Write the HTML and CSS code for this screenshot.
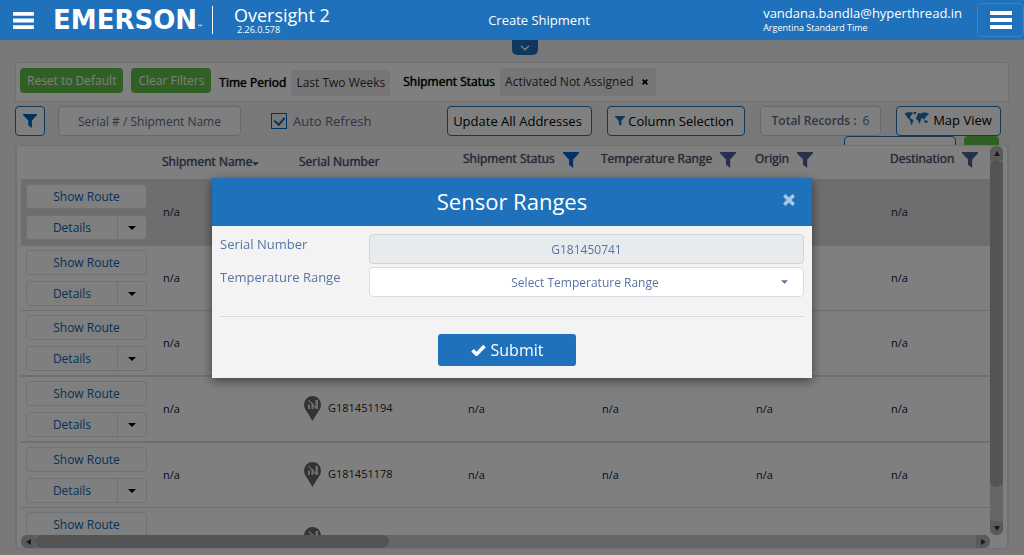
FILE: index.html
```html
<!DOCTYPE html>
<html lang="en">
<head>
<meta charset="utf-8">
<meta name="viewport" content="width=device-width, initial-scale=1">
<title>Oversight 2 - Create Shipment</title>
<link rel="stylesheet" href="styles.css">
</head>
<body>
<svg class="defs" aria-hidden="true">
  <symbol id="funnel" viewBox="0 0 16 16"><path d="M0 0h16v1.200l-5.800 6.300V16L6 12.800V7.500L0 1.200z"/></symbol>
  <symbol id="bars" viewBox="0 0 22 18"><path d="M0 0h22v4H0zM0 7h22v4H0zM0 14h22v4H0z"/></symbol>
  <symbol id="caret" viewBox="0 0 8 4"><path d="M0 0h8L4 4z"/></symbol>
  <symbol id="cross" viewBox="0 0 12 12"><path d="M2.500 0 6 3.500 9.500 0 12 2.500 8.500 6 12 9.500 9.500 12 6 8.500 2.500 12 0 9.500 3.500 6 0 2.500z"/></symbol>
  <symbol id="pin" viewBox="0 0 17 25"><path d="M8.500 0A8.500 8.500 0 0 0 0 8.500C0 12 2 14.500 4 17.500L8.500 25 13 17.500c2-3 4-5.500 4-9A8.500 8.500 0 0 0 8.500 0z"/><path class="pin-chart" d="M4 8.500h2V13H4zM7.500 7h2v6h-2zM11.500 4H14v9h-2.500zM4 4.500l1-.8 7 7.500v1.800z"/></symbol>
  <symbol id="world" viewBox="0 0 24 13"><path d="M0 1l3-.8L7 .3l1 1.500-1.500 1L5.800 4.500 4.500 5.500l1 1 2 .8 1 1.200-.8 1.500L7 12.500l-1 .3-.6-3L4.500 7.500 2.500 6 1.500 3.500 0 2.800zM8 0l3.500 0L10.500 2.300l-1 .5zM12 3l1.500-2 2 .5L19 .2l4.800 1-.5 1.500L21.500 4l-1 1.800-1 1-.7 1-.8-2-.8 1.200L16.500 5.500l-.5 2L15 11l-1 .6-1-3.400-1.800-1-.2-2L12.500 4zM19.500 8.700l2-.7 1.300 1.800-.6 1.200-1.200-.3-1.500.3zM18.200 6.800l1.300 1.500-1 .3z"/></symbol>
</svg>

<header class="topbar">
  <button class="menu-btn" type="button" aria-label="Main menu"><svg width="21" height="17"><use href="#bars"/></svg></button>
  <div class="logo">EMERSON<span class="tm">™</span></div>
  <div class="product"><div class="product-name">Oversight 2</div><div class="version">2.26.0.578</div></div>
  <h1 class="page-title">Create Shipment</h1>
  <div class="user"><div class="email">vandana.bandla@hyperthread.in</div><div class="zone">Argentina Standard Time</div></div>
  <button class="menu-btn framed" type="button" aria-label="User menu"><svg width="22" height="18"><use href="#bars"/></svg></button>
</header>

<main class="page">
  <button class="drop-tab" type="button" aria-label="Expand"><svg width="10" height="6" viewBox="0 0 10 6"><path d="M1 .8l4 4 4-4"/></svg></button>

  <section class="filters">
    <button class="btn-green" type="button">Reset to Default</button>
    <button class="btn-green" type="button">Clear Filters</button>
    <div class="criterion low"><span class="criterion-name">Time Period</span><span class="chip">Last Two Weeks</span></div>
    <div class="criterion"><span class="criterion-name">Shipment Status</span><span class="chip wide">Activated Not Assigned<button class="chip-x" type="button" aria-label="Remove filter"><svg width="6" height="6"><use href="#cross"/></svg></button></span></div>
  </section>

  <section class="toolbar">
    <button class="tool funnel-btn" type="button" aria-label="Filter"><svg width="14" height="14"><use href="#funnel"/></svg></button>
    <input class="search" type="text" placeholder="Serial # / Shipment Name" aria-label="Serial # / Shipment Name">
    <label class="auto"><input class="check" type="checkbox" checked>Auto Refresh</label>
    <div class="tools">
      <button class="tool update" type="button">Update All Addresses</button>
      <button class="tool columns" type="button"><svg class="blue" width="10" height="10"><use href="#funnel"/></svg>Column Selection</button>
      <div class="tool total"><b>Total Records :</b><span>6</span></div>
      <button class="tool map" type="button"><svg class="blue world" width="24" height="13"><use href="#world"/></svg>Map View</button>
    </div>
  </section>
  <div class="overflow-tools">
    <button class="tool stub" type="button" aria-label="More tools"></button>
    <button class="stub-green" type="button" aria-label="Export"></button>
  </div>

  <section class="panel">
    <div class="viewport">
      <table class="grid">
        <colgroup><col class="c-act"><col class="c-name"><col class="c-serial"><col class="c-status"><col class="c-temp"><col class="c-origin"><col></colgroup>
        <thead>
          <tr>
            <th aria-label="Actions"></th>
            <th class="plain">Shipment Name<svg class="sort" width="7" height="4"><use href="#caret"/></svg></th>
            <th class="plain">Serial Number</th>
            <th><span class="th">Shipment Status<svg class="active" width="16" height="16"><use href="#funnel"/></svg></span></th>
            <th><span class="th">Temperature Range<svg width="16" height="16"><use href="#funnel"/></svg></span></th>
            <th><span class="th">Origin<svg width="16" height="16"><use href="#funnel"/></svg></span></th>
            <th><span class="th">Destination<svg width="16" height="16"><use href="#funnel"/></svg></span></th>
          </tr>
        </thead>
        <tbody>
          <tr class="selected">
            <td><div class="actions"><button class="act" type="button">Show Route</button><div class="split"><button class="act" type="button">Details</button><button class="act more" type="button" aria-label="More"><svg width="8" height="4"><use href="#caret"/></svg></button></div></div></td>
            <td>n/a</td><td></td><td></td><td></td><td></td><td>n/a</td>
          </tr>
          <tr>
            <td><div class="actions"><button class="act" type="button">Show Route</button><div class="split"><button class="act" type="button">Details</button><button class="act more" type="button" aria-label="More"><svg width="8" height="4"><use href="#caret"/></svg></button></div></div></td>
            <td>n/a</td><td></td><td></td><td></td><td></td><td>n/a</td>
          </tr>
          <tr class="tall">
            <td><div class="actions"><button class="act" type="button">Show Route</button><div class="split"><button class="act" type="button">Details</button><button class="act more" type="button" aria-label="More"><svg width="8" height="4"><use href="#caret"/></svg></button></div></div></td>
            <td>n/a</td><td></td><td></td><td></td><td></td><td>n/a</td>
          </tr>
          <tr class="tall">
            <td><div class="actions"><button class="act" type="button">Show Route</button><div class="split"><button class="act" type="button">Details</button><button class="act more" type="button" aria-label="More"><svg width="8" height="4"><use href="#caret"/></svg></button></div></div></td>
            <td>n/a</td><td><span class="serial"><svg width="17" height="25"><use href="#pin"/></svg>G181451194</span></td><td class="inset">n/a</td><td>n/a</td><td>n/a</td><td>n/a</td>
          </tr>
          <tr>
            <td><div class="actions"><button class="act" type="button">Show Route</button><div class="split"><button class="act" type="button">Details</button><button class="act more" type="button" aria-label="More"><svg width="8" height="4"><use href="#caret"/></svg></button></div></div></td>
            <td>n/a</td><td><span class="serial"><svg width="17" height="25"><use href="#pin"/></svg>G181451178</span></td><td class="inset">n/a</td><td>n/a</td><td>n/a</td><td>n/a</td>
          </tr>
          <tr>
            <td><div class="actions"><button class="act" type="button">Show Route</button></div></td>
            <td></td><td><span class="serial"><svg width="17" height="25"><use href="#pin"/></svg></span></td><td></td><td></td><td></td><td></td>
          </tr>
        </tbody>
      </table>
    </div>
    <div class="bar bar-v"><span class="arrow"><svg width="6" height="5" viewBox="0 0 6 5"><path d="M0 5h6L3 0z"/></svg></span><span class="thumb"></span><span class="arrow end"><svg width="6" height="5" viewBox="0 0 6 5"><path d="M0 0h6L3 5z"/></svg></span></div>
    <div class="bar bar-h"><span class="arrow"><svg width="5" height="6" viewBox="0 0 5 6"><path d="M5 0v6L0 3z"/></svg></span><span class="thumb"></span><span class="arrow end"><svg width="5" height="6" viewBox="0 0 5 6"><path d="M0 0v6l5-3z"/></svg></span></div>
  </section>
</main>

<div class="backdrop">
  <form class="modal" role="dialog" aria-labelledby="modal-title">
    <div class="modal-head">
      <h2 class="modal-title" id="modal-title">Sensor Ranges</h2>
      <button class="close" type="button" aria-label="Close"><svg width="12" height="12"><use href="#cross"/></svg></button>
    </div>
    <div class="modal-body">
      <div class="field"><label for="serial">Serial Number</label><input id="serial" class="control" type="text" value="G181450741" readonly></div>
      <div class="field"><label for="range">Temperature Range</label>
        <div class="select-wrap"><select id="range" class="control"><option>Select Temperature Range</option></select><svg width="7" height="4"><use href="#caret"/></svg></div></div>
      <div class="modal-foot">
        <button class="submit" type="button"><svg width="15" height="12" viewBox="0 0 15 12"><path d="M1.500 6.200l4 4L13.500 2"/></svg>Submit</button>
      </div>
    </div>
  </form>
</div>
</body>
</html>
```

FILE: styles.css
```css
* { box-sizing: border-box; }
html, body { height: 100%; }
body {
  margin: 0;
  display: flex;
  flex-direction: column;
  overflow: hidden;
  background: #f2f2f2;
  color: #4a5a80;
  font: 13px/18px "Open Sans", "Noto Sans", sans-serif;
}
button, input, select { font: inherit; color: inherit; margin: 0; }
button { padding: 0; border: 0; background: none; cursor: pointer; }
svg { display: block; flex: none; fill: currentColor; }
.defs { position: absolute; width: 0; height: 0; }

/* Top bar */
.topbar {
  position: relative;
  z-index: 10;
  display: flex;
  align-items: center;
  flex: none;
  height: 40px;
  padding-left: 13px;
  background: #1e71ba;
  color: #fff;
}
.menu-btn { display: grid; place-items: center; }
.framed { width: 47px; height: 34px; margin-left: 15px; border: 1px solid #3b83c3; border-radius: 5px; }
.logo {
  display: flex;
  align-items: flex-end;
  height: 28px;
  margin-left: 19px;
  padding-right: 9px;
  border-right: 1px solid #fff;
  font: bold 26px/28px "DejaVu Sans", sans-serif;
}
.tm { font-size: 6px; line-height: 14px; }
.product { margin-left: 21px; }
.product-name { font-size: 18px; line-height: 20px; }
.version { padding-left: 3px; font-size: 9px; line-height: 10px; font-weight: 500; }
.page-title { flex: 1; margin: 0; padding-right: 15px; font-size: 13px; font-weight: 400; text-align: center; }
.email { line-height: 16px; }
.zone { font-size: 9px; line-height: 14px; }

/* Page */
.page { flex: 1; min-height: 0; display: flex; flex-direction: column; padding: 0 15px 6px; }
.drop-tab {
  align-self: center;
  display: grid;
  place-items: center;
  width: 26px;
  height: 15px;
  margin-left: 26px;
  border-radius: 0 0 5px 5px;
  background: #1e71ba;
  color: #fff;
}
.drop-tab path { fill: none; stroke: currentColor; stroke-width: 1.500; }

.filters {
  display: flex;
  align-items: flex-start;
  flex: none;
  gap: 8px;
  height: 40px;
  margin-top: 7px;
  padding: 5px 4px;
  border: 1px solid #dcdce6;
  border-radius: 4px;
  background: #fff;
}
.btn-green { height: 25px; padding: 0 7px; border-radius: 4px; background: #60c048; color: #fff; font-size: 12px; }
.criterion { display: flex; align-items: center; gap: 5px; margin-left: 5px; font-size: 12px; color: #333; }
.criterion.low { margin: 2px 0 0; }
.criterion-name { color: #000; font-weight: 500; text-shadow: 0 0 1px currentColor; }
.chip { display: flex; align-items: center; gap: 8px; height: 26px; padding: 0 5px; background: #ececec; }
.chip.wide { height: 28px; padding-right: 8px; }
.chip-x { color: #000; }

.toolbar { display: flex; align-items: center; flex: none; height: 30px; margin-top: 4px; }
.tool {
  display: flex;
  align-items: center;
  justify-content: center;
  height: 30px;
  border: 1px solid #1e71ba;
  border-radius: 4px;
  background: #fff;
  color: #000;
}
.funnel-btn { width: 30px; color: #0067c5; }
.search {
  width: 183px;
  height: 30px;
  margin-left: 13px;
  border: 1px solid #cfd3dc;
  border-radius: 4px;
  background: #fff;
  font-size: 12px;
  text-align: center;
}
.search::placeholder { color: #5d6b8a; opacity: 1; }
.auto { display: flex; align-items: center; gap: 6px; margin-left: 30px; color: #5d6b8a; }
.check { appearance: none; width: 16px; height: 16px; border: 1px solid #0067c5; display: grid; place-items: center; }
.check:checked::after { content: ""; width: 5px; height: 8px; margin-bottom: 2px; border: solid #0067c5; border-width: 0 2px 2px 0; transform: rotate(40deg); }
.tools { display: flex; gap: 15px; margin-left: auto; margin-right: 8px; }
.blue { color: #1e71ba; }
.update { width: 145px; padding-right: 4px; }
.columns { width: 138px; padding-right: 3px; gap: 3px; }
.total { width: 121px; gap: 6px; border-color: #cfd3dc; color: #5d6b8a; font-size: 12px; }
.total b { font-weight: 600; }
.map { width: 105px; gap: 4px; padding-bottom: 2px; }
.world { margin-bottom: 4px; }
.overflow-tools { display: flex; justify-content: flex-end; flex: none; gap: 8px; height: 9px; padding-right: 10px; overflow: hidden; }
.stub { width: 112px; }
.stub-green { width: 35px; height: 30px; border-radius: 4px; background: #60c048; }

/* Shipment table */
.panel {
  flex: 1;
  min-height: 0;
  display: grid;
  grid-template: minmax(0, 1fr) 13px / minmax(0, 1fr) 13px;
  padding: 0 4px;
  border: 2px solid #dde3ea;
  border-top-width: 1px;
  border-bottom-width: 1px;
  border-radius: 4px;
  background: #fff;
}
.viewport { overflow: hidden; }
.grid { width: 100%; border-collapse: separate; border-spacing: 0; table-layout: fixed; font-size: 11px; color: #14143c; }
.c-act { width: 141px; }
.c-name { width: 137px; }
.c-serial { width: 164px; }
.c-status { width: 138px; }
.c-temp { width: 154px; }
.c-origin { width: 135px; }
.grid th { height: 33px; padding: 0; text-align: left; vertical-align: top; font-size: 12px; font-weight: 500; color: #4a5470; text-shadow: 0 0 1px currentColor; }
.grid th.plain { padding-top: 7px; }
.th { display: flex; align-items: center; gap: 8px; padding-top: 4px; }
.th svg { margin-top: 2px; color: #4f6396; }
.th svg.active { color: #0067d5; }
.sort { display: inline-block; }
.grid td { height: 65px; padding: 0 0 0 1px; border-bottom: 1px solid #d9dfe8; }
.grid .tall td { height: 66px; border-bottom-width: 2px; }
.grid .selected td { height: 67px; border-color: #dcdcdc; background: #dcdcdc; }
.grid td.inset { padding-left: 5px; }
.grid td:first-child { padding: 4px 15px 0 5px; vertical-align: top; }
.grid .selected td:first-child { padding-top: 5px; }
.actions { display: grid; gap: 6px; }
.split { display: flex; }
.act { flex: 1; height: 25px; border: 1px solid #dde3ea; border-radius: 4px; background: #fff; color: #0a64b4; font-size: 12px; }
.split .act:first-child { border-radius: 4px 0 0 4px; }
.split .more { flex: 0 0 30px; display: grid; place-items: center; margin-left: -1px; border-radius: 0 4px 4px 0; color: #000; }
.serial { display: flex; align-items: center; gap: 7px; padding: 0 0 2px 4px; color: #222; }
.serial svg { color: #666; }
.pin-chart { fill: #ddd; }

.bar { display: flex; border-radius: 6px; background: #ccc; overflow: hidden; }
.bar-v { flex-direction: column; }
.bar .arrow { flex: 0 0 14px; display: grid; place-items: center; background: #b4b4b4; color: #333; }
.bar .thumb { border-radius: 6px; background: #a8a8a8; }
.bar .end { margin-top: auto; }
.bar-v .thumb { height: 84%; }
.bar-h .thumb { width: 36.500%; }
.bar-h .end { margin: 0 0 0 auto; }

/* Dialog */
.backdrop { position: fixed; inset: 0; display: flex; justify-content: center; align-items: center; background: rgba(0, 0, 0, .5); }
.modal { width: 600px; max-width: 100%; background: #f3f3f3; box-shadow: 0 3px 10px rgba(0, 0, 0, .5); }
.modal-head { display: grid; grid-template-columns: 38px 1fr 38px; align-items: center; height: 48px; padding: 0 4px; background: #1e71ba; color: #fff; }
.modal-title { grid-column: 2; margin: 0; padding-bottom: 2px; font-size: 22px; line-height: 30px; font-weight: 400; text-align: center; }
.close { display: grid; place-items: center; height: 24px; margin-bottom: 4px; color: #a5c6e3; }
.modal-body { display: grid; gap: 3px; padding: 8px; }
.field { display: grid; grid-template-columns: 149px 1fr; color: #5874a3; }
.field label { padding-top: 1px; }
.control {
  display: block;
  width: 100%;
  height: 30px;
  padding: 2px 10px 0;
  border: 1px solid #d9dce8;
  border-radius: 4px;
  background: #fff;
  font-size: 12px;
  text-align: center;
  text-align-last: center;
  appearance: none;
}
.control[readonly] { border-color: #cdd4da; background: #e7ebee; }
.select-wrap { display: grid; align-items: center; }
.select-wrap > * { grid-area: 1 / 1; }
.select-wrap select { padding-right: 13px; }
.select-wrap svg { justify-self: end; margin-right: 16px; pointer-events: none; }
.modal-foot { display: flex; justify-content: center; margin-top: 16px; padding: 17px 10px 4px 0; border-top: 1px solid #d9d9db; }
.submit { display: flex; align-items: center; justify-content: center; gap: 5px; width: 138px; height: 32px; border-radius: 3px; background: #1e71ba; color: #fff; font-size: 16px; }
.submit path { fill: none; stroke: currentColor; stroke-width: 3.500; }
```
